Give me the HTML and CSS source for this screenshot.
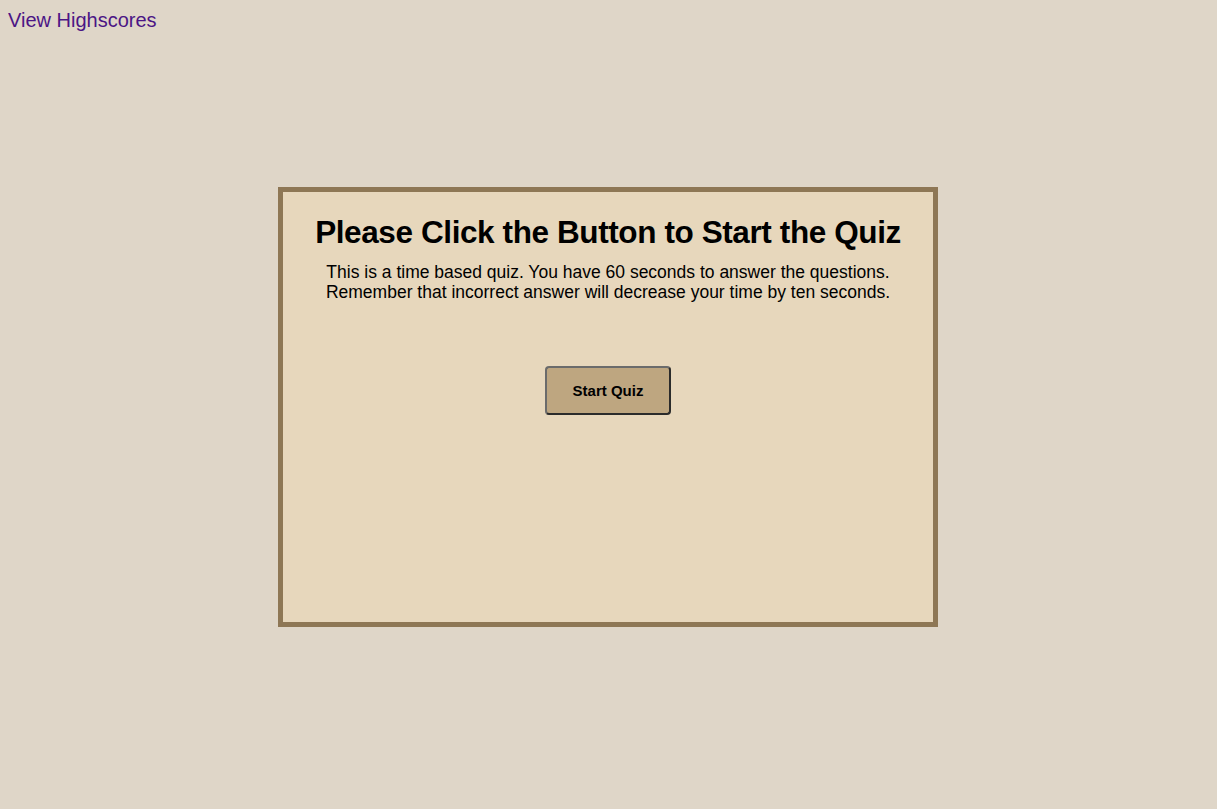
FILE: index.html
```html
<!DOCTYPE html>
<html>
<head>
<meta charset="utf-8">
<link rel="stylesheet" href="styles.css">
</head>
<body>
<header class="top">
  <a class="highscores" href="#">View Highscores</a>
</header>
<main class="wrap">
  <section class="quiz-card">
    <h1 class="title">Please Click the Button to Start the Quiz</h1>
    <p class="intro">This is a time based quiz. You have 60 seconds to answer the questions.<br>Remember that incorrect answer will decrease your time by ten seconds.</p>
    <button class="start-btn">Start Quiz</button>
  </section>
</main>
</body>
</html>
```

FILE: styles.css
```css
html, body {
  background: #dfd6c8;
}
body {
  margin: 8px;
  font-family: "Liberation Sans", Arial, Helvetica, sans-serif;
  color: #000;
}
.top {
  height: 24px;
}
.highscores {
  font-size: 20px;
  line-height: 24px;
  color: #4b1585;
  text-decoration: none;
}
.wrap {
  display: flex;
  justify-content: center;
  padding-top: 155px;
  padding-right: 1px;
}
.quiz-card {
  box-sizing: border-box;
  width: 660px;
  height: 440px;
  border: 5px solid #8e7755;
  background: #e7d7bc;
  display: flex;
  flex-direction: column;
  align-items: center;
  text-align: center;
  padding-top: 20px;
}
.title {
  margin: 0;
  font-size: 31.5px;
  line-height: 40px;
  font-weight: bold;
  letter-spacing: -0.4px;
}
.intro {
  margin: 10px 0 0;
  font-size: 17.5px;
  line-height: 20px;
}
.start-btn {
  margin-top: 64px;
  width: 126px;
  height: 49px;
  background: #bea680;
  border: 2px solid #2b2b2b;
  border-top-color: #6b6b6b;
  border-left-color: #6b6b6b;
  border-radius: 4px;
  font-family: "Liberation Sans", Arial, sans-serif;
  font-weight: bold;
  font-size: 15px;
  color: #000;
}
```
